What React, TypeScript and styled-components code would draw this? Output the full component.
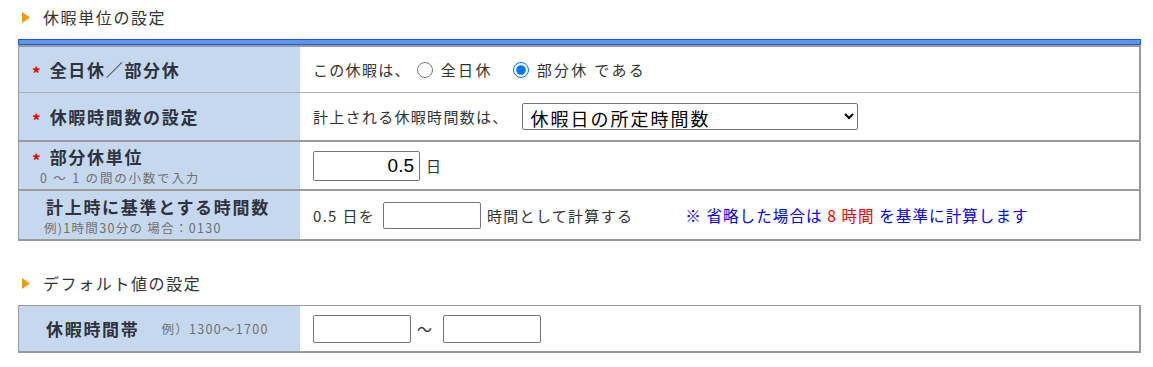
import styled, { createGlobalStyle } from "styled-components";

const GlobalStyle = createGlobalStyle`
    body {
        margin: 0;
        background: #ffffff;
        font-family: "Noto Sans CJK JP", "Noto Sans", sans-serif;
        color: #333333;
    }
`

const Page = styled.div`
    padding: 0 0 0 18px;
    width: 1123px;
`

const SectionHeading = styled.div<{ $top?: number }>`
    display: flex;
    align-items: center;
    gap: 13px;
    height: 34px;
    margin-top: ${props => props.$top ?? 0}px;
    margin-bottom: 5px;
    padding-left: 4px;
    font-size: 16px;
    letter-spacing: 1.6px;
    color: #333;
`

const BlueBar = styled.div`
    height: 4px;
    background: #5f95ee;
    border: 1px solid #1b5cd6;
`

const Table = styled.div<{ $topWidth?: number }>`
    border: 1px solid #9a9a9a;
    border-top-width: ${props => props.$topWidth ?? 1}px;
    border-right-width: 2px;
    border-bottom-width: 2px;
`

const Row = styled.div<{ $sep?: number; $height: number }>`
    display: grid;
    grid-template-columns: 281px 1fr;
    height: ${props => props.$height}px;
    border-top: ${props => props.$sep ?? 0}px solid ${props => (props.$sep ?? 0) > 1 ? "#9a9a9a" : "#b0b0b0"};
`

const LabelCell = styled.div<{ $indent?: number; $inline?: boolean }>`
    background: #c6d8ee;
    display: flex;
    flex-direction: ${props => props.$inline ? "row" : "column"};
    align-items: ${props => props.$inline ? "center" : "flex-start"};
    justify-content: ${props => props.$inline ? "flex-start" : "center"};
    padding-left: ${props => props.$indent ?? 14}px;
`

const LabelMain = styled.div`
    display: flex;
    align-items: center;
    font-size: 17px;
    font-weight: bold;
    letter-spacing: 1.7px;
    line-height: 25px;
    color: #2f3340;
`

const Required = styled.span`
    color: #ee0000;
    font-size: 17px;
    font-weight: bold;
    margin-right: 9px;
    letter-spacing: 0;
    transform: translateY(3px);
`

const LabelSub = styled.div<{ $shift?: number; $spacing?: number }>`
    font-size: 12.5px;
    line-height: 18px;
    color: #707070;
    letter-spacing: ${props => props.$spacing ?? 1.3}px;
    margin-left: ${props => props.$shift ?? 0}px;
`

const ValueCell = styled.div`
    display: flex;
    align-items: center;
    padding-left: 13px;
    font-size: 15px;
    letter-spacing: 1.3px;
    color: #333;
    white-space: nowrap;
`

const RadioLabel = styled.label<{ $gap?: number }>`
    display: inline-flex;
    align-items: center;
    margin-left: ${props => props.$gap ?? 0}px;
    gap: 8px;
    letter-spacing: 2.3px;
`

const Radio = styled.input`
    width: 16px;
    height: 16px;
    margin: 0;
    accent-color: #0075ff;
`

const Select = styled.select`
    margin-left: 13px;
    width: 336px;
    height: 27px;
    font-family: "Noto Sans CJK JP", sans-serif;
    font-size: 18px;
    letter-spacing: 2px;
    color: #000;
    border: 1px solid #767676;
    border-radius: 2px;
    background: #fff;
    padding: 0 4px;
`

const TextBox = styled.input<{ $w: number; $h: number; $size?: number }>`
    box-sizing: border-box;
    width: ${props => props.$w}px;
    height: ${props => props.$h}px;
    border: 1px solid #767676;
    border-radius: 2px;
    font-family: "Liberation Sans", sans-serif;
    font-size: ${props => props.$size ?? 15}px;
    text-align: right;
    padding: 0 5px;
    color: #000;
    margin: 0 6px 0 0;
`

const Spacer = styled.span<{ $w: number }>`
    display: inline-block;
    width: ${props => props.$w}px;
`

const Note = styled.span`
    margin-left: 52px;
    color: #0000ee;
    font-size: 15.5px;
    letter-spacing: 1.1px;
`

const Red = styled.span`
    color: #ee0000;
`

function Triangle() {
    return (
        <svg width="8" height="11" viewBox="0 0 8 11">
            <polygon points="0,0 8,5.5 0,11" fill="#f29a00" />
        </svg>
    )
}

export default function App() {
    return (
        <>
            <GlobalStyle />
            <Page>
                <SectionHeading>
                    <Triangle />
                    休暇単位の設定
                </SectionHeading>
                <BlueBar />
                <Table $topWidth={2}>
                    <Row $height={45}>
                        <LabelCell $indent={13}>
                            <LabelMain><Required>*</Required>全日休／部分休</LabelMain>
                        </LabelCell>
                        <ValueCell>
                            この休暇は、
                            <RadioLabel $gap={6}><Radio type="radio" name="unit" />全日休</RadioLabel>
                            <RadioLabel $gap={20}><Radio type="radio" name="unit" defaultChecked />部分休 である</RadioLabel>
                        </ValueCell>
                    </Row>
                    <Row $sep={1} $height={47}>
                        <LabelCell $indent={13}>
                            <LabelMain><Required>*</Required>休暇時間数の設定</LabelMain>
                        </LabelCell>
                        <ValueCell>
                            計上される休暇時間数は、
                            <Select defaultValue="a">
                                <option value="a">休暇日の所定時間数</option>
                            </Select>
                        </ValueCell>
                    </Row>
                    <Row $sep={2} $height={47}>
                        <LabelCell $indent={13}>
                            <LabelMain><Required>*</Required>部分休単位</LabelMain>
                            <LabelSub $shift={8} $spacing={1.8}>0 ～ 1 の間の小数で入力</LabelSub>
                        </LabelCell>
                        <ValueCell>
                            <TextBox $w={107} $h={30} $size={19} defaultValue="0.5" />
                            日
                        </ValueCell>
                    </Row>
                    <Row $sep={2} $height={48}>
                        <LabelCell $indent={27}>
                            <LabelMain>計上時に基準とする時間数</LabelMain>
                            <LabelSub $shift={-2}>例)1時間30分の 場合：0130</LabelSub>
                        </LabelCell>
                        <ValueCell>
                            0.5 日を<Spacer $w={8} />
                            <TextBox $w={98} $h={27} />
                            時間として計算する
                            <Note>※ 省略した場合は <Red>8 時間</Red> を基準に計算します</Note>
                        </ValueCell>
                    </Row>
                </Table>
                <SectionHeading $top={25}>
                    <Triangle />
                    デフォルト値の設定
                </SectionHeading>
                <Table>
                    <Row $height={45}>
                        <LabelCell $indent={27} $inline>
                            <LabelMain>休暇時間帯</LabelMain>
                            <LabelSub $shift={22}>例）1300～1700</LabelSub>
                        </LabelCell>
                        <ValueCell>
                            <TextBox $w={98} $h={28} />
                            ～
                            <Spacer $w={10} />
                            <TextBox $w={98} $h={28} />
                        </ValueCell>
                    </Row>
                </Table>
            </Page>
        </>
    )
}
